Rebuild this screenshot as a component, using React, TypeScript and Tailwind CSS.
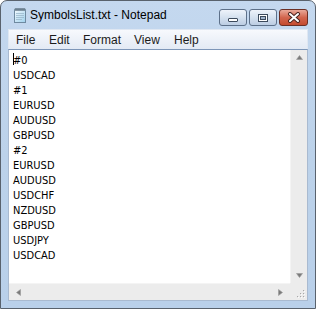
import React from "react";

const lines = [
  "#0",
  "USDCAD",
  "#1",
  "EURUSD",
  "AUDUSD",
  "GBPUSD",
  "#2",
  "EURUSD",
  "AUDUSD",
  "USDCHF",
  "NZDUSD",
  "GBPUSD",
  "USDJPY",
  "USDCAD",
];

const menu = ["File", "Edit", "Format", "View", "Help"];

const NotepadIcon = () => (
  <svg width="16" height="16" viewBox="0 0 16 16">
    <defs>
      <linearGradient id="pg" x1="0" y1="0" x2="1" y2="1">
        <stop offset="0" stopColor="#f4fbff" />
        <stop offset="1" stopColor="#9fd0ec" />
      </linearGradient>
    </defs>
    <rect x="2.5" y="2.5" width="11" height="13" fill="url(#pg)" stroke="#6f8aa0" />
    <rect x="2.5" y="1.5" width="11" height="2" fill="#8aa2b4" />
    <path d="M4 1v3M6 1v3M8 1v3M10 1v3M12 1v3" stroke="#3d4d5a" strokeWidth="0.8" />
    <path d="M4 6.5h8M4 8.5h8M4 10.5h8M4 12.5h6" stroke="#9ab8cc" strokeWidth="0.8" />
  </svg>
);

const CaptionButton = ({ kind }: { kind: "min" | "max" | "close" }) => {
  if (kind === "close") {
    return (
      <div className="w-[29px] h-[17px] rounded-[3px] border border-[#6b2f25] bg-gradient-to-b from-[#e9a899] via-[#d2654e] to-[#c44a2e] flex items-center justify-center">
        <svg width="14" height="11" viewBox="0 0 14 11">
          <path d="M3 2l8 7M11 2l-8 7" stroke="#4a2420" strokeWidth="4" strokeLinecap="round" />
          <path d="M3 2l8 7M11 2l-8 7" stroke="#ffffff" strokeWidth="2" strokeLinecap="round" />
        </svg>
      </div>
    );
  }
  return (
    <div className="w-[28px] h-[17px] rounded-[3px] border border-[#5d7089] bg-gradient-to-b from-[#eef3fa] via-[#d5e1ef] to-[#bccde3] flex items-center justify-center">
      {kind === "min" ? (
        <div className="mt-[5px] w-[10px] h-[4px] bg-white border border-[#3c4a5c] rounded-[1px]" />
      ) : (
        <div className="w-[10px] h-[8px] border border-[#3c4a5c] bg-white flex items-center justify-center">
          <div className="w-[6px] h-[4px] border border-[#3c4a5c] bg-[#9fb3cc]" />
        </div>
      )}
    </div>
  );
};

const Arrow = ({ dir }: { dir: "up" | "down" | "left" | "right" }) => {
  const d = {
    up: "M0.5 4.5L3.5 0.5L6.5 4.5Z",
    down: "M0.5 0.5L3.5 4.5L6.5 0.5Z",
    left: "M4.5 0.5L0.5 3.5L4.5 6.5Z",
    right: "M0.5 0.5L4.5 3.5L0.5 6.5Z",
  }[dir];
  const vertical = dir === "up" || dir === "down";
  return (
    <svg width={vertical ? 7 : 5} height={vertical ? 5 : 7} viewBox={vertical ? "0 0 7 5" : "0 0 5 7"}>
      <path d={d} fill="#7a7a7a" stroke="#9a9a9a" strokeWidth="0.6" />
    </svg>
  );
};

const Grip = () => (
  <svg width="10" height="10" viewBox="0 0 10 10">
    {[
      [8, 2],
      [5, 5],
      [8, 5],
      [2, 8],
      [5, 8],
      [8, 8],
    ].map(([x, y]) => (
      <g key={`${x}-${y}`}>
        <rect x={x + 0.6} y={y + 0.6} width="1.4" height="1.4" fill="#ffffff" />
        <rect x={x} y={y} width="1.2" height="1.2" fill="#a8a8a8" />
      </g>
    ))}
  </svg>
);

export default function App() {
  return (
    <div className="w-[316px] h-[309px] bg-white" style={{ fontFamily: '"Liberation Sans", Arial, sans-serif' }}>
      <div className="w-full h-full rounded-t-[7px] border border-[#59626d] bg-gradient-to-b from-[#c4d8ef] via-[#bcd2ea] to-[#b9d0ea] flex flex-col px-[7px] pb-[7px]">
        {/* title bar */}
        <div className="h-[28px] flex items-start">
          <div className="mt-[6px] ml-[4px]">
            <NotepadIcon />
          </div>
          <div className="ml-[2px] mt-[6px] text-[12px] leading-[16px] text-black">SymbolsList.txt - Notepad</div>
          <div className="ml-auto mt-[8px] flex gap-[2px]">
            <CaptionButton kind="min" />
            <CaptionButton kind="max" />
            <CaptionButton kind="close" />
          </div>
        </div>

        {/* menu bar */}
        <div className="h-[20px] flex items-center bg-gradient-to-b from-[#f7f9fd] to-[#e3eaf4] border-x border-t border-[#dfe7f2] text-[12px] text-[#1b1b1b]">
          {menu.map((m, i) => (
            <div
              key={m}
              className={
                i === 0 ? "pl-[7px] w-[40px]" : i === 1 ? "w-[34px]" : i === 2 ? "w-[51px]" : i === 3 ? "w-[40px]" : "w-[40px]"
              }
            >
              {m}
            </div>
          ))}
        </div>

        {/* edit area */}
        <div className="flex-1 flex flex-col border border-t-[#7d96b8] border-x-[#a9bad0] border-b-[#a9bad0] bg-white">
          <div className="flex-1 flex min-h-0">
            <div
              className="relative flex-1 pl-[4px] pt-[3px] text-[11px] leading-[15px] text-black font-stretch-condensed"
              style={{ fontFamily: '"DejaVu Sans Condensed", "DejaVu Sans", sans-serif' }}
            >
              {lines.map((l, i) => (
                <div key={i}>{l}</div>
              ))}
              <div className="absolute left-[4px] top-[3px] w-[1px] h-[12px] bg-black" />
            </div>
            <div className="w-[17px] bg-[#ececec] border-l border-[#f4f4f4] flex flex-col items-center justify-between py-[5px]">
              <Arrow dir="up" />
              <Arrow dir="down" />
            </div>
          </div>
          <div className="h-[17px] flex">
            <div className="flex-1 bg-[#ececec] border-t border-[#f4f4f4] flex items-center justify-between px-[7px]">
              <Arrow dir="left" />
              <Arrow dir="right" />
            </div>
            <div className="w-[17px] bg-[#ececec] flex items-end justify-end p-[2px]">
              <Grip />
            </div>
          </div>
        </div>
      </div>
    </div>
  );
}
